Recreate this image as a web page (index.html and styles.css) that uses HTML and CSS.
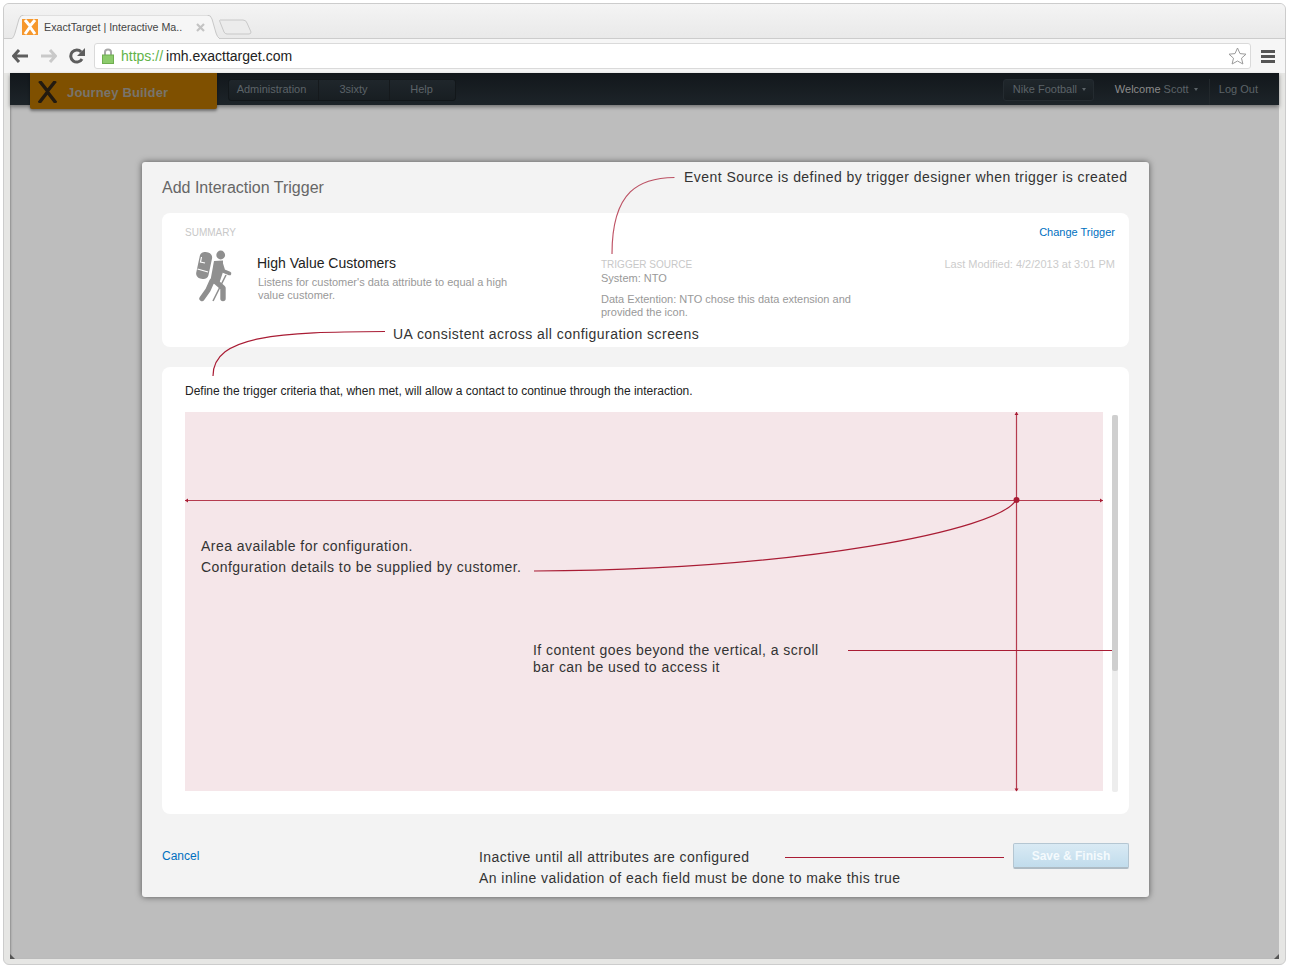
FILE: index.html
```html
<!DOCTYPE html>
<html>
  <head>
    <meta charset="utf-8">
    <title>ExactTarget | Interactive Marketing Hub</title>
    <link rel="stylesheet" href="styles.css">
  </head>

  <body>
    <div class="window">

      <!-- browser chrome -->
      <div class="tabstrip">
        <div class="tab">
          <svg class="tabShape" viewBox="0 0 210 24" preserveAspectRatio="none">
            <path d="M0 24 C3 24 4 21 5 18 L9 4 Q10 0 14 0 H197 Q201 0 202 4 L206 18 Q207 22 210 24" fill="#f6f6f6" stroke="#c8c8c8"/>
          </svg>
          <svg class="favicon" viewBox="0 0 16 16">
            <rect width="16" height="16" fill="#f6982d"/>
            <path d="M3 1 L8 7 L13 1 M3 15 L8 8 L13 15" fill="none" stroke="#fff" stroke-width="3"/>
          </svg>
          <span class="tabTitle">ExactTarget | Interactive Ma..</span>
          <svg class="tabClose" viewBox="0 0 9 9">
            <path d="M1 1 L8 8 M8 1 L1 8" stroke="#c4c4c4" stroke-width="2.2"/>
          </svg>
        </div>
        <svg class="newTab" width="33" height="16" viewBox="0 0 33 16">
          <path d="M1 1 H24 Q27 1 28 4 L32 13 Q32 15 30 15 H8 Q6 15 5 13 L1 3 Q0 1 1 1 Z" fill="#ececec" stroke="#c8c8c8"/>
        </svg>
      </div>

      <div class="toolbar">
        <svg class="navIcon" width="16" height="14" viewBox="0 0 16 14">
          <path d="M7 1 L1.5 7 L7 13 M2 7 H16" fill="none" stroke="#5e5e5e" stroke-width="3"/>
        </svg>
        <svg class="navIcon forward" width="16" height="14" viewBox="0 0 16 14">
          <path d="M9 1 L14.5 7 L9 13 M14 7 H0" fill="none" stroke="#c9c9c9" stroke-width="3"/>
        </svg>
        <svg class="navIcon reload" width="16" height="16" viewBox="0 0 16 16">
          <path d="M13 11 A6 6 0 1 1 12.2 4" fill="none" stroke="#5e5e5e" stroke-width="3"/>
          <path d="M16 0 V8 H8 Z" fill="#5e5e5e"/>
        </svg>
        <div class="address">
          <svg class="lock" width="12" height="16" viewBox="0 0 12 16">
            <path d="M3 8 V4 Q3 1.5 6 1.5 Q9 1.5 9 4 V8" fill="none" stroke="#a8a8a8" stroke-width="2"/>
            <rect x="0.5" y="7" width="11" height="8.5" fill="#8ccb6c" stroke="#6fae50"/>
          </svg>
          <span class="scheme">https://</span>
          <span class="host">imh.exacttarget.com</span>
          <svg class="star" width="19" height="18" viewBox="0 0 19 18">
            <path d="M9.5 1 L12 6.6 L18 7.2 L13.5 11.2 L14.9 17 L9.5 14 L4.1 17 L5.5 11.2 L1 7.2 L7 6.6 Z" fill="#fff" stroke="#9a9a9a"/>
          </svg>
        </div>
        <div class="menuBars"><i></i><i></i><i></i></div>
      </div>

      <div class="viewport">

        <!-- app header, dimmed by the modal -->
        <div class="appNav">
          <div class="brand">
            <svg width="19" height="22" viewBox="0 0 19 22">
              <path d="M1.5 0 L9.5 10 L17.5 0 M1 22 L9.5 11 L18 22" fill="none" stroke="#221a10" stroke-width="3.4"/>
            </svg>
            <span class="brandName">Journey Builder</span>
          </div>
          <div class="navGroup">
            <span class="navItem admin">Administration</span>
            <span class="navItem sixty">3sixty</span>
            <span class="navItem help">Help</span>
          </div>
          <div class="navRight">
            <span class="orgBtn">Nike Football<b class="caret"></b></span>
            <span class="welcome">Welcome <em>Scott</em><b class="caret"></b></span>
            <span class="logout">Log Out</span>
          </div>
        </div>

        <div class="modal">
          <h2 class="modalTitle">Add Interaction Trigger</h2>

          <div class="card summary">
            <div class="sumLeft">
              <div class="label">SUMMARY</div>
              <div class="sumMain">
                <svg class="hiker" width="38" height="52" viewBox="194 250 38 52">
                  <rect x="198" y="252" width="12.5" height="27" rx="5" transform="rotate(12 204 265)" fill="#8f8f8f"/>
                  <path d="M201.5 257 L200.5 262 L205 263 M197.5 269 L208 272" fill="none" stroke="#fff" stroke-width="1.2"/>
                  <circle cx="220.7" cy="255" r="4.4" fill="#8f8f8f"/>
                  <path d="M214 261 L223 260.5 L223 272 L219 284 L210 283 Z" fill="#8f8f8f"/>
                  <path d="M212 281 L208 290 L202 298.5 M215 281 L223 288 L223 298.5" fill="none" stroke="#8f8f8f" stroke-width="5.4" stroke-linecap="round" stroke-linejoin="round"/>
                  <path d="M221 263 L223.5 271 L229.5 273.5" fill="none" stroke="#8f8f8f" stroke-width="3.6" stroke-linecap="round" stroke-linejoin="round"/>
                  <path d="M226 275 L213 301" fill="none" stroke="#8f8f8f" stroke-width="1.5"/>
                </svg>
                <div class="sumText">
                  <div class="triggerName">High Value Customers</div>
                  <p class="muted">Listens for customer's data attribute to equal a high value customer.</p>
                </div>
              </div>
            </div>
            <div class="sumMid">
              <div class="label">TRIGGER SOURCE</div>
              <p class="muted">System: NTO</p>
              <p class="muted dataExt">Data Extention: NTO chose this data extension and provided the icon.</p>
            </div>
            <div class="sumRight">
              <a class="link">Change Trigger</a>
              <div class="modified">Last Modified: 4/2/2013 at 3:01 PM</div>
            </div>
          </div>

          <div class="card config">
            <div class="configIntro">Define the trigger criteria that, when met, will allow a contact to continue through the interaction.</div>
            <div class="configBody">
              <div class="configArea"></div>
              <div class="scrollTrack"><div class="scrollThumb"></div></div>
            </div>
          </div>

          <div class="modalFoot">
            <a class="link cancel">Cancel</a>
            <span class="saveBtn">Save &amp; Finish</span>
          </div>

          <!-- red wireframe notes drawn over the modal, coordinates are page pixels -->
          <svg class="notesLines" viewBox="142 162 1007 735">
            <g fill="none" stroke="#a91c34" stroke-width="1.2">
              <path opacity="0.75" d="M674.5 177.5 C640 178 612 190 612 254"/>
              <path d="M385 331.5 C280 332 213 335 213 376"/>
              <path opacity="0.85" d="M185 500.5 H1103 M1016.5 412 V791"/>
              <path d="M534 571 C800 570 1000 530 1016 500"/>
              <path d="M848 650.5 H1112"/>
              <path d="M785 857.5 H1004"/>
            </g>
            <g fill="#a91c34">
              <circle cx="1016.5" cy="500" r="3"/>
              <path d="M185 500.5 L188 498.5 V502.5 Z M1103 500.5 L1100 498.5 V502.5 Z M1016.5 412 L1014.5 415 H1018.5 Z M1016.5 791.5 L1014.5 788.5 H1018.5 Z"/>
            </g>
          </svg>
          <div class="note noteSource">Event Source is defined by trigger designer when trigger is created</div>
          <div class="note noteUa">UA consistent across all configuration screens</div>
          <div class="note noteArea">Area available for configuration.<br>Confguration details to be supplied by customer.</div>
          <div class="note noteScroll">If content goes beyond the vertical, a scroll<br>bar can be used to access it</div>
          <div class="note noteSave">Inactive until all attributes are configured<br>An inline validation of each field must be done to make this true</div>
        </div>

        <div class="corner cornerL"></div>
        <div class="corner cornerR"></div>
      </div>
    </div>
  </body>
</html>
```

FILE: styles.css
```css
html,body{
  font-family: "Liberation Sans", Arial, sans-serif;
  height: 100%;
  margin: 0px;
  padding: 0px;
  background-color: #FFF;
  overflow: hidden;
}

p{
  margin: 0px;
}

.window{
  box-sizing: border-box;
  width: 1283px;
  height: 962px;
  margin: 3px 0px 0px 3px;
  border: solid 1px #CCC;
  border-radius: 6px;
  background-color: #E6E6E4;
  display: flex;
  flex-direction: column;
  overflow: hidden;
}

/* browser chrome */
.tabstrip{
  box-sizing: border-box;
  height: 35px;
  padding: 11px 0px 0px 6px;
  display: flex;
  align-items: flex-start;
  background: linear-gradient(#F4F4F4, #E9E9E9);
  border-bottom: solid 1px #CCC;
}

.tab{
  position: relative;
  box-sizing: border-box;
  width: 210px;
  height: 24px;
  padding-left: 12px;
  display: flex;
  align-items: center;
  flex-shrink: 0;
}

.tabShape{
  position: absolute;
  top: 0px;
  left: 0px;
  width: 100%;
  height: 100%;
}

.favicon{
  position: relative;
  width: 16px;
  height: 16px;
}

.tabTitle{
  position: relative;
  margin-left: 6px;
  width: 152px;
  font-size: 10.7px;
  color: #444;
  white-space: nowrap;
}

.tabClose{
  position: relative;
  width: 9px;
  height: 9px;
}

.newTab{
  margin: 4px 0px 0px -1px;
}

.toolbar{
  box-sizing: border-box;
  height: 34px;
  display: flex;
  align-items: center;
  padding-left: 8px;
  background-color: #F6F6F6;
}

.navIcon{
  flex-shrink: 0;
}

.forward{
  margin-left: 13px;
}

.reload{
  margin-left: 12px;
}

.address{
  box-sizing: border-box;
  margin-left: 9px;
  width: 1157px;
  height: 26px;
  padding: 0px 3px 0px 7px;
  display: flex;
  align-items: center;
  background-color: #FFF;
  border: solid 1px #DADADA;
  border-radius: 3px;
  font-size: 14px;
  white-space: pre;
}

.scheme{
  margin-left: 7px;
  color: #62B34A;
}

.host{
  margin-left: 3px;
  color: #222;
}

.star{
  margin-left: auto;
}

.menuBars{
  margin-left: 10px;
  width: 14px;
  display: flex;
  flex-direction: column;
  gap: 2px;
}

.menuBars i{
  display: block;
  height: 3px;
  background-color: #555;
}

.viewport{
  position: relative;
  height: 886px;
  margin: 0px 6px 5px 6px;
  background-color: #BDBDBD;
  box-shadow: inset 2px 0px 2px -1px rgba(0,0,0,0.25);
}

.corner{
  position: absolute;
  bottom: 0px;
  width: 0px;
  height: 0px;
  border-bottom: solid 5px #555;
}

.cornerL{
  left: 0px;
  border-right: solid 5px transparent;
}

.cornerR{
  right: 0px;
  border-left: solid 5px transparent;
}

/* app header */
.appNav{
  box-sizing: border-box;
  height: 32px;
  padding-left: 20px;
  display: flex;
  align-items: flex-start;
  background: linear-gradient(#12171B, #1D2429);
  box-shadow: 0px 2px 4px rgba(0,0,0,0.4);
  font-size: 11px;
  color: #5C6368;
}

.brand{
  position: relative;
  z-index: 2;
  box-sizing: border-box;
  width: 187px;
  height: 36px;
  padding: 8px 0px 0px 8px;
  display: flex;
  align-items: flex-start;
  background-color: #7F5000;
  border-radius: 0px 0px 2px 2px;
  box-shadow: 0px 2px 3px rgba(0,0,0,0.4);
}

.brandName{
  margin: 4px 0px 0px 10px;
  font-size: 13px;
  font-weight: bold;
  letter-spacing: 0.15px;
  color: #78746C;
}

.navGroup{
  box-sizing: border-box;
  margin: 6px 0px 0px 11px;
  width: 228px;
  height: 22px;
  display: flex;
  background: linear-gradient(#1F262B, #181E22);
  border: solid 1px #12171A;
  border-radius: 3px;
  line-height: 19px;
  text-align: center;
}

.navItem{
  box-sizing: border-box;
  border-right: solid 1px #15191C;
}

.admin{
  width: 90px;
  padding-right: 4px;
}

.sixty{
  width: 71px;
  padding-right: 1px;
}

.help{
  width: 65px;
  padding-right: 2px;
  border-right: none;
}

.navRight{
  margin-left: auto;
  display: flex;
  align-items: flex-start;
  height: 32px;
}

.orgBtn{
  box-sizing: border-box;
  width: 91px;
  height: 22px;
  margin-top: 6px;
  padding-left: 9px;
  background: linear-gradient(#1F262B, #181E22);
  border: solid 1px #242B30;
  border-radius: 3px;
  line-height: 19px;
}

.welcome{
  margin: 6px 0px 0px 21px;
  width: 94px;
  height: 26px;
  line-height: 21px;
  color: #8B8B8B;
  border-right: solid 1px #22282C;
}

.welcome em{
  font-style: normal;
  color: #5C6368;
}

.caret{
  display: inline-block;
  margin: 0px 0px 2px 5px;
  border-left: solid 2.5px transparent;
  border-right: solid 2.5px transparent;
  border-top: solid 3px #5C6368;
}

.logout{
  margin: 6px 21px 0px 9px;
  line-height: 21px;
}

/* modal */
.modal{
  position: relative;
  box-sizing: border-box;
  width: 1007px;
  height: 735px;
  margin: 57px 0px 0px 132px;
  padding: 0px 20px;
  background-color: #F3F3F3;
  border-radius: 3px;
  box-shadow: 0px 0px 6px rgba(0,0,0,0.55);
}

.modalTitle{
  margin: 0px;
  height: 51px;
  padding-top: 16px;
  box-sizing: border-box;
  font-size: 16px;
  font-weight: normal;
  color: #666;
  line-height: 19px;
}

.card{
  box-sizing: border-box;
  background-color: #FFF;
  border-radius: 8px;
}

.summary{
  height: 134px;
  padding: 13px 14px 0px 23px;
  display: flex;
}

.label{
  font-size: 10px;
  line-height: 11px;
  color: #C8C8C8;
}

.muted{
  font-size: 11px;
  line-height: 13px;
  color: #999;
}

.sumLeft{
  width: 416px;
  padding-top: 1px;
  flex-shrink: 0;
}

.sumMain{
  display: flex;
  margin-top: 12px;
}

.hiker{
  margin-left: 9px;
  flex-shrink: 0;
}

.sumText{
  margin-left: 26px;
  width: 265px;
  padding-top: 5px;
}

.triggerName{
  margin-left: -1px;
  font-size: 14px;
  line-height: 16px;
  color: #222;
}

.sumText .muted{
  margin-top: 5px;
}

.sumMid{
  width: 262px;
  padding-top: 33px;
  flex-shrink: 0;
}

.sumMid .muted{
  margin-top: 2px;
}

.sumMid .dataExt{
  margin-top: 8px;
}

.sumRight{
  flex: 1;
  text-align: right;
  font-size: 11px;
}

.link{
  color: #0070BF;
  font-size: 11px;
}

.modified{
  margin-top: 20px;
  color: #CCC;
}

.config{
  height: 447px;
  margin-top: 20px;
  padding: 17px 0px 0px 23px;
}

.configIntro{
  font-size: 12px;
  line-height: 14px;
  color: #222;
}

.configBody{
  display: flex;
  margin-top: 14px;
}

.configArea{
  width: 918px;
  height: 379px;
  background-color: #F5E6E9;
}

.scrollTrack{
  margin: 3px 0px 0px 9px;
  width: 6px;
  height: 377px;
  background-color: #EDEDED;
  border-radius: 2px;
}

.scrollThumb{
  height: 256px;
  background-color: #CFCFCF;
  border-radius: 2px;
}

.modalFoot{
  display: flex;
  justify-content: space-between;
  align-items: center;
  margin-top: 29px;
}

.cancel{
  font-size: 12px;
}

.saveBtn{
  box-sizing: border-box;
  width: 116px;
  height: 26px;
  background: linear-gradient(#D9EAF4, #C1DCEC);
  border: solid 1px #B4C6D2;
  border-bottom: solid 2px #AEBBC4;
  border-radius: 2px;
  text-align: center;
  font-size: 12px;
  font-weight: bold;
  line-height: 24px;
  color: #F4FAFD;
}

/* wireframe notes */
.notesLines{
  position: absolute;
  top: 0px;
  left: 0px;
  width: 1007px;
  height: 735px;
  pointer-events: none;
}

.note{
  position: absolute;
  font-size: 14px;
  letter-spacing: 0.45px;
  color: #333;
  white-space: nowrap;
}

.noteSource{
  top: 7px;
  left: 542px;
}

.noteUa{
  top: 164px;
  left: 251px;
}

.noteArea{
  top: 374px;
  left: 59px;
  line-height: 21px;
}

.noteScroll{
  top: 480px;
  left: 391px;
  line-height: 17px;
}

.noteSave{
  top: 685px;
  left: 337px;
  line-height: 21px;
}
```
